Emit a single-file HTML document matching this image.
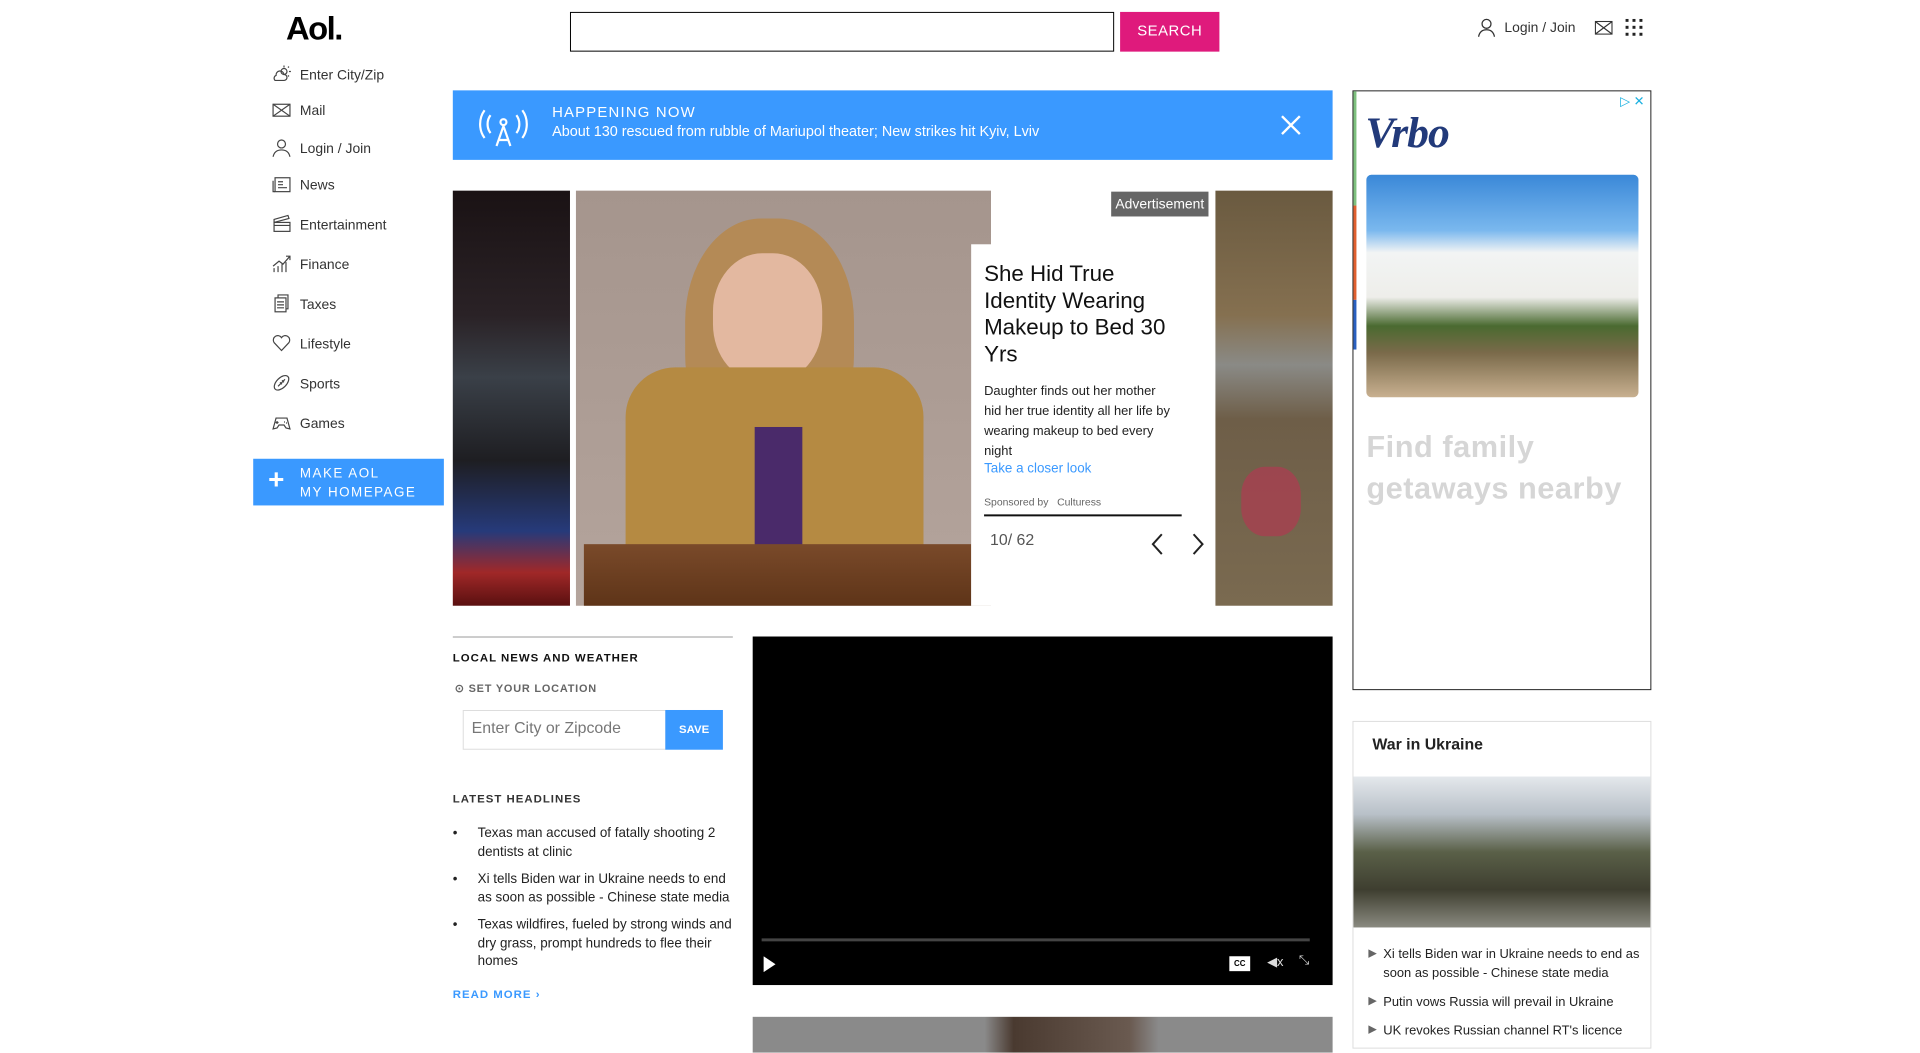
<!DOCTYPE html>
<html><head><meta charset="utf-8"><style>
*{box-sizing:border-box;margin:0;padding:0}
body{width:1920px;height:1040px;overflow:hidden;background:#fff;font-family:"Liberation Sans",sans-serif;color:#222;position:relative}
#w{position:absolute;left:0;top:0;width:1920px;height:1060px;transform:scale(0.993);transform-origin:0 0}
.a{position:absolute}
.nav{position:absolute;left:274px;font-size:14px;color:#333;display:flex;align-items:center}
.nav svg{width:19px;height:19px;margin-right:9px;stroke:#444;fill:none;stroke-width:1.2}
ul{list-style:none}
</style></head><body><div id="w">
<div class="a" style="left:288px;top:10px;font-size:33px;font-weight:bold;letter-spacing:-1.5px;color:#000">Aol.</div>
<div class="a" style="left:574px;top:12px;width:548px;height:40px;border:1.5px solid #000"></div>
<div class="a" style="left:1128px;top:12px;width:100px;height:40px;background:#df1a7c;color:#fff;font-size:15px;line-height:40px;text-align:center;letter-spacing:.5px">SEARCH</div>
<svg class="a" style="left:1487px;top:18px" width="20" height="20" fill="none" stroke="#333" stroke-width="1.3"><circle cx="10" cy="6" r="4.5"/><path d="M2 19c1-5 4-7 8-7s7 2 8 7"/></svg>
<div class="a" style="left:1515px;top:19px;font-size:14px;color:#333">Login / Join</div>
<svg class="a" style="left:1606px;top:21px" width="18" height="14" fill="none" stroke="#333" stroke-width="1.2"><rect x=".6" y=".6" width="16.8" height="12.8"/><path d="M1 1l16 12M17 1L1 13"/></svg>
<svg class="a" style="left:1637px;top:19px" width="18" height="18" fill="#222"><rect x="0" y="0" width="3" height="3"/><rect x="7" y="0" width="3" height="3"/><rect x="14" y="0" width="3" height="3"/><rect x="0" y="7" width="3" height="3"/><rect x="7" y="7" width="3" height="3"/><rect x="14" y="7" width="3" height="3"/><rect x="0" y="14" width="3" height="3"/><rect x="7" y="14" width="3" height="3"/><rect x="14" y="14" width="3" height="3"/></svg>

<div class="nav" style="top:65px"><svg viewBox="0 0 19 19"><path d="M3 16h9a3 3 0 0 0 0-6 4 4 0 0 0-8 1 3 3 0 0 0-1 5z"/><circle cx="12" cy="7" r="3"/><path d="M12 1v2M17 7h2M16 3l1-1M16 11l1 1"/></svg>Enter City/Zip</div>
<div class="nav" style="top:101px"><svg viewBox="0 0 19 19"><rect x="1" y="4" width="17" height="12"/><path d="M1 4l17 12M18 4L1 16"/></svg>Mail</div>
<div class="nav" style="top:139px"><svg viewBox="0 0 19 19"><circle cx="9.5" cy="6" r="4"/><path d="M1 19c1-5 4-7 8.5-7s7.5 2 8.5 7"/></svg>Login / Join</div>
<div class="nav" style="top:176px"><svg viewBox="0 0 19 19"><rect x="3" y="3" width="15" height="14"/><path d="M1 6v11h2M6 7h5M6 10h5M6 13h9"/></svg>News</div>
<div class="nav" style="top:216px"><svg viewBox="0 0 19 19"><rect x="2" y="8" width="16" height="9"/><path d="M2 8l15-4-1-3L2 5zM2 11h16"/></svg>Entertainment</div>
<div class="nav" style="top:256px"><svg viewBox="0 0 19 19"><path d="M2 18v-4M6 18v-6M10 18v-8M14 18v-10M1 12l6-5 4 3 7-8M14 2h4v4"/></svg>Finance</div>
<div class="nav" style="top:296px"><svg viewBox="0 0 19 19"><rect x="3" y="4" width="11" height="14"/><path d="M6 4V1h10v14h-2M5 8h7M5 11h7M5 14h7"/></svg>Taxes</div>
<div class="nav" style="top:336px"><svg viewBox="0 0 19 19"><path d="M9.5 17L2 9a4.5 4.5 0 0 1 7.5-5 4.5 4.5 0 0 1 7.5 5z"/></svg>Lifestyle</div>
<div class="nav" style="top:376px"><svg viewBox="0 0 19 19"><ellipse cx="9.5" cy="9.5" rx="9" ry="5" transform="rotate(-45 9.5 9.5)"/><path d="M6 13l7-7M8 9l2 2M10 7l2 2"/></svg>Sports</div>
<div class="nav" style="top:416px"><svg viewBox="0 0 19 19"><path d="M4 5h11l3 11-4-1-2-3H7l-2 3-4 1z"/><path d="M5 8v3M3.5 9.5h3M12 9h1M14 10h1"/></svg>Games</div>
<div class="a" style="left:255px;top:462px;width:192px;height:47px;background:#3a99ff;color:#fff"><div class="a" style="left:15px;top:6px;font-size:28px;font-weight:bold;line-height:30px">+</div><div class="a" style="left:47px;top:5px;font-size:13.5px;letter-spacing:1.5px;line-height:19px">MAKE AOL<br>MY HOMEPAGE</div></div>

<div class="a" style="left:456px;top:91px;width:886px;height:70px;background:#3a99ff;color:#fff">
<svg class="a" style="left:24px;top:14px" width="54" height="44" fill="none" stroke="#fff" stroke-width="2.2"><path d="M8 6c-6 8-6 20 0 28M46 6c6 8 6 20 0 28M14 11c-4 5-4 13 0 18M40 11c4 5 4 13 0 18"/><circle cx="27" cy="18" r="3"/><path d="M27 22l-7 20M27 22l7 20M22 36h10"/></svg>
<div class="a" style="left:100px;top:14px;font-size:15px;letter-spacing:1.2px">HAPPENING NOW</div>
<div class="a" style="left:100px;top:34px;font-size:14.5px">About 130 rescued from rubble of Mariupol theater; New strikes hit Kyiv, Lviv</div>
<svg class="a" style="left:834px;top:25px" width="20" height="20" stroke="#fff" stroke-width="2.4"><path d="M1 1l18 18M19 1L1 19"/></svg>
</div>

<div class="a" style="left:456px;top:192px;width:118px;height:418px;background:linear-gradient(180deg,#1a1214 0%,#2a2226 30%,#3a4048 45%,#1e1e22 65%,#263a7a 82%,#a02828 92%,#5a1010 100%)"></div>
<div class="a" style="left:580px;top:192px;width:418px;height:418px;background:linear-gradient(180deg,#a5958d,#b4a49c)"></div>
<div class="a" style="left:690px;top:220px;width:170px;height:230px;border-radius:45% 45% 40% 40%;background:#b48a56"></div>
<div class="a" style="left:718px;top:255px;width:110px;height:130px;border-radius:45%;background:#e3b8a0"></div>
<div class="a" style="left:630px;top:370px;width:300px;height:180px;border-radius:50px 50px 0 0;background:#b58a42"></div>
<div class="a" style="left:760px;top:430px;width:48px;height:120px;background:#4a2a6a"></div>
<div class="a" style="left:588px;top:548px;width:390px;height:62px;background:linear-gradient(180deg,#7a4a2a,#5e3418)"></div>
<div class="a" style="left:978px;top:246px;width:246px;height:364px;background:#fff"></div>
<div class="a" style="left:998px;top:192px;width:226px;height:54px;background:#fff"></div>
<div class="a" style="left:1119px;top:193px;width:98px;height:25px;background:#666;color:#fff;font-size:14px;line-height:25px;text-align:center">Advertisement</div>
<div class="a" style="left:991px;top:262px;width:190px;font-size:22.5px;line-height:27px;color:#111">She Hid True Identity Wearing Makeup to Bed 30 Yrs</div>
<div class="a" style="left:991px;top:384px;width:188px;font-size:13px;line-height:20px;color:#222">Daughter finds out her mother hid her true identity all her life by wearing makeup to bed every night</div>
<div class="a" style="left:991px;top:464px;font-size:13.5px;color:#3a99ff">Take a closer look</div>
<div class="a" style="left:991px;top:500px;font-size:10.5px;color:#666">Sponsored by &nbsp; Culturess</div>
<div class="a" style="left:991px;top:518px;width:199px;height:2px;background:#111"></div>
<div class="a" style="left:997px;top:536px;font-size:16px;color:#555">10/ 62</div>
<svg class="a" style="left:1158px;top:536px" width="56" height="24" fill="none" stroke="#222" stroke-width="2"><path d="M12 2L3 12l9 10M44 2l9 10-9 10"/></svg>
<div class="a" style="left:1224px;top:192px;width:118px;height:418px;background:linear-gradient(180deg,#6a5a40 0%,#857050 30%,#8a8a86 42%,#6e5e48 55%,#7a6a50 100%)"></div>
<div class="a" style="left:1250px;top:470px;width:60px;height:70px;border-radius:40%;background:#a84050;opacity:.8"></div>

<div class="a" style="left:456px;top:641px;width:282px;height:1px;background:#999"></div>
<div class="a" style="left:456px;top:657px;font-size:11.5px;font-weight:bold;letter-spacing:1px;color:#111">LOCAL NEWS AND WEATHER</div>
<div class="a" style="left:458px;top:687px;font-size:11px;font-weight:bold;letter-spacing:.8px;color:#666">⊙ SET YOUR LOCATION</div>
<div class="a" style="left:466px;top:715px;width:205px;height:40px;border:1px solid #ddd;font-size:16px;color:#777;padding:9px 8px">Enter City or Zipcode</div>
<div class="a" style="left:670px;top:715px;width:58px;height:40px;background:#3a99ff;color:#fff;font-size:11.5px;font-weight:bold;text-align:center;line-height:40px">SAVE</div>
<div class="a" style="left:456px;top:799px;font-size:11.5px;font-weight:bold;letter-spacing:1px;color:#333">LATEST HEADLINES</div>
<ul class="a" style="left:456px;top:830px;width:290px;font-size:13.5px;line-height:18.5px;color:#222">
<li style="padding-left:25px;position:relative;margin-bottom:9px"><span class="a" style="left:0">•</span>Texas man accused of fatally shooting 2 dentists at clinic</li>
<li style="padding-left:25px;position:relative;margin-bottom:9px"><span class="a" style="left:0">•</span>Xi tells Biden war in Ukraine needs to end as soon as possible - Chinese state media</li>
<li style="padding-left:25px;position:relative"><span class="a" style="left:0">•</span>Texas wildfires, fueled by strong winds and dry grass, prompt hundreds to flee their homes</li></ul>
<div class="a" style="left:456px;top:996px;font-size:11.5px;font-weight:bold;letter-spacing:1px;color:#3a99ff">READ MORE ›</div>

<div class="a" style="left:758px;top:641px;width:584px;height:351px;background:#000">
<div class="a" style="left:9px;top:304px;width:552px;height:3px;background:#444"></div>
<svg class="a" style="left:10px;top:322px" width="14" height="16" fill="#fff"><path d="M1 0l12 8-12 8z"/></svg>
<div class="a" style="left:480px;top:322px;width:21px;height:15px;background:#fff;color:#000;font-size:8px;font-weight:bold;text-align:center;line-height:15px">CC</div>
<div class="a" style="left:518px;top:320px;color:#ddd;font-size:13px">◀x</div>
<div class="a" style="left:550px;top:318px;color:#ddd;font-size:13px">⤡</div>
</div>
<div class="a" style="left:758px;top:1024px;width:584px;height:36px;background:linear-gradient(90deg,#8a8a8a 0,#8a8a8a 40%,#4a3a30 45%,#6a5a50 65%,#8a8a8a 70%)"></div>

<div class="a" style="left:1362px;top:91px;width:301px;height:604px;border:1px solid #222">
<div class="a" style="left:0;top:0;width:3px;height:115px;background:#7ec07e"></div><div class="a" style="left:0;top:115px;width:3px;height:95px;background:#e06030"></div><div class="a" style="left:0;top:210px;width:3px;height:50px;background:#2a60c0"></div>
<div class="a" style="right:6px;top:2px;color:#1ab0e0;font-size:13px">▷ ✕</div>
<div class="a" style="left:12px;top:16px;font-family:'Liberation Serif',serif;font-style:italic;font-weight:bold;font-size:44px;color:#223a7a;letter-spacing:-1px">Vrbo</div>
<div class="a" style="left:13px;top:84px;width:274px;height:224px;border-radius:5px;background:linear-gradient(180deg,#3a88d8 0%,#7ab8ee 25%,#f2f4f4 35%,#eeeeea 55%,#4a6a30 68%,#7a6a4a 80%,#c8b090 100%)"></div>
<div class="a" style="left:13px;top:337px;font-size:31px;font-weight:bold;color:#d6d6d6;line-height:42px;letter-spacing:.5px">Find family<br>getaways nearby</div>
</div>
<div class="a" style="left:1362px;top:726px;width:301px;height:330px;border:1px solid #ddd">
<div class="a" style="left:19px;top:15px;font-size:16px;font-weight:bold;color:#222">War in Ukraine</div>
<div class="a" style="left:0;top:55px;width:299px;height:152px;background:linear-gradient(180deg,#e4e8ec 0%,#b8c0c8 25%,#5a6048 50%,#3e3e30 75%,#8a8a80 100%)"></div>
<div class="a" style="left:15px;top:224px;width:280px;font-size:13px;line-height:19px;color:#222">
<div style="padding-left:15px;position:relative;margin-bottom:10px"><span class="a" style="left:0;color:#666;font-size:11px">▶</span>Xi tells Biden war in Ukraine needs to end as soon as possible - Chinese state media</div>
<div style="padding-left:15px;position:relative;margin-bottom:10px"><span class="a" style="left:0;color:#666;font-size:11px">▶</span>Putin vows Russia will prevail in Ukraine</div>
<div style="padding-left:15px;position:relative"><span class="a" style="left:0;color:#666;font-size:11px">▶</span>UK revokes Russian channel RT's licence</div></div>
</div>
</div></body></html>
